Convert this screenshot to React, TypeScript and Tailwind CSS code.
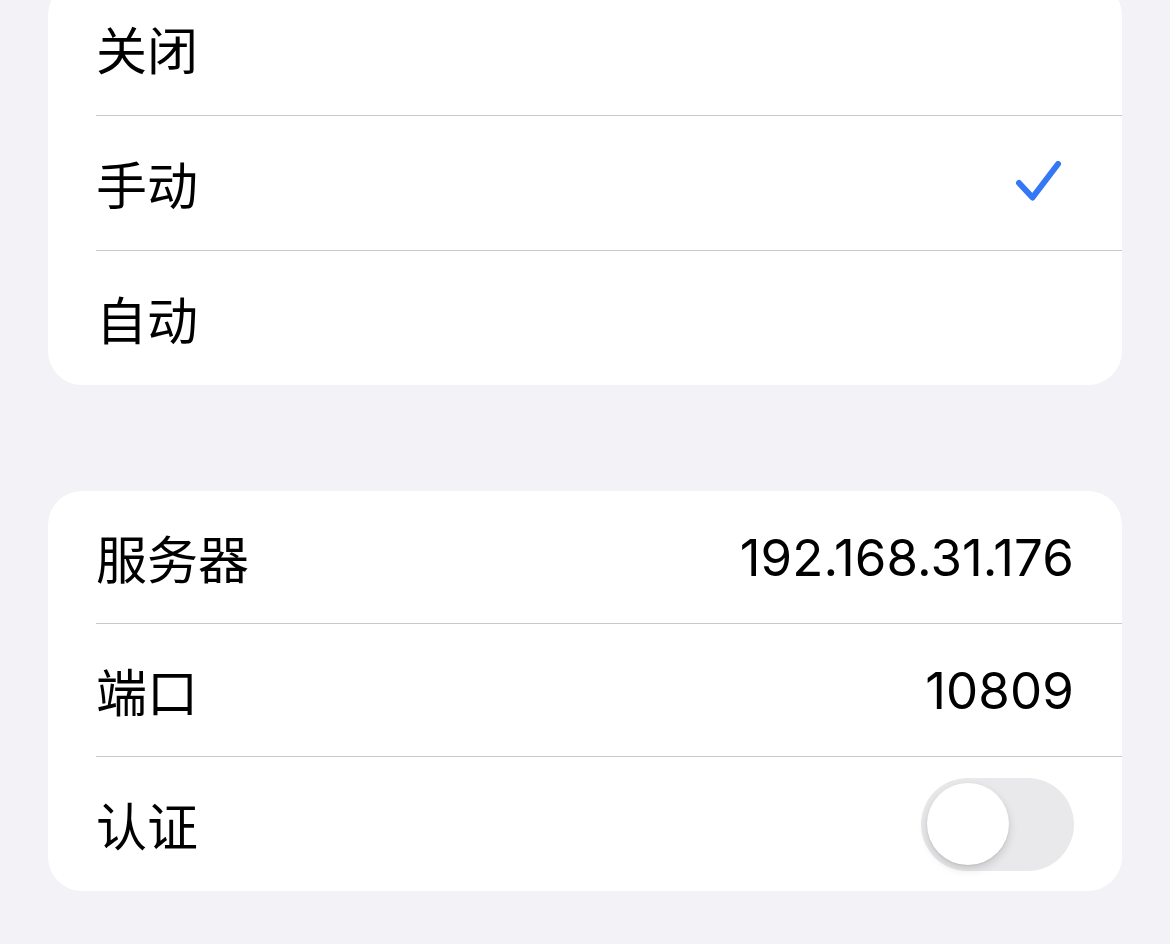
import React from "react";

const font = { fontFamily: '"Inter", "Noto Sans CJK SC", sans-serif' };

function Row({
  label,
  right,
  sep = true,
  h,
}: {
  label: string;
  right?: React.ReactNode;
  sep?: boolean;
  h: string;
}) {
  return (
    <div className={`relative flex items-center pl-[48px] ${h}`}>
      <div className="flex flex-1 items-center justify-between pr-[48px] h-full">
        <span className="text-[51px] leading-none text-black" style={{ fontFamily: '"Noto Sans CJK SC", sans-serif' }}>
          {label}
        </span>
        {right}
      </div>
      {sep && <div className="absolute bottom-0 left-[48px] right-0 h-px bg-[#c8c7cc]" />}
    </div>
  );
}

function Check() {
  return (
    <svg width="46" height="46" viewBox="0 0 46 46" className="mr-[12px]">
      <path
        d="M3 22 L16.5 36.5 L42 3"
        fill="none"
        stroke="#3478f6"
        strokeWidth="6"
        strokeLinecap="round"
        strokeLinejoin="round"
      />
    </svg>
  );
}

function Toggle() {
  return (
    <div className="relative h-[93px] w-[153px] rounded-full bg-[#e9e9eb]">
      <div className="absolute left-[6px] top-[5px] h-[82px] w-[82px] rounded-full bg-white shadow-[0_4px_10px_rgba(0,0,0,0.15),0_1px_2px_rgba(0,0,0,0.08)]" />
    </div>
  );
}

export default function App() {
  return (
    <div className="min-h-[944px] w-[1170px] overflow-hidden bg-[#f2f2f7] px-[48px]" style={font}>
      <div className="-mt-[19px] overflow-hidden rounded-[34px] bg-white">
        <Row label="关闭" h="h-[135px]" />
        <Row label="手动" h="h-[135px]" right={<Check />} />
        <Row label="自动" h="h-[134px]" sep={false} />
      </div>
      <div className="mt-[106px] overflow-hidden rounded-[34px] bg-white">
        <Row
          label="服务器"
          h="h-[133px]"
          right={<span className="text-[51px] leading-none text-black tracking-[0.1px]" style={font}>192.168.31.176</span>}
        />
        <Row
          label="端口"
          h="h-[133px]"
          right={<span className="text-[51px] leading-none text-black tracking-[0.1px]" style={font}>10809</span>}
        />
        <Row label="认证" h="h-[134px]" sep={false} right={<Toggle />} />
      </div>
    </div>
  );
}
